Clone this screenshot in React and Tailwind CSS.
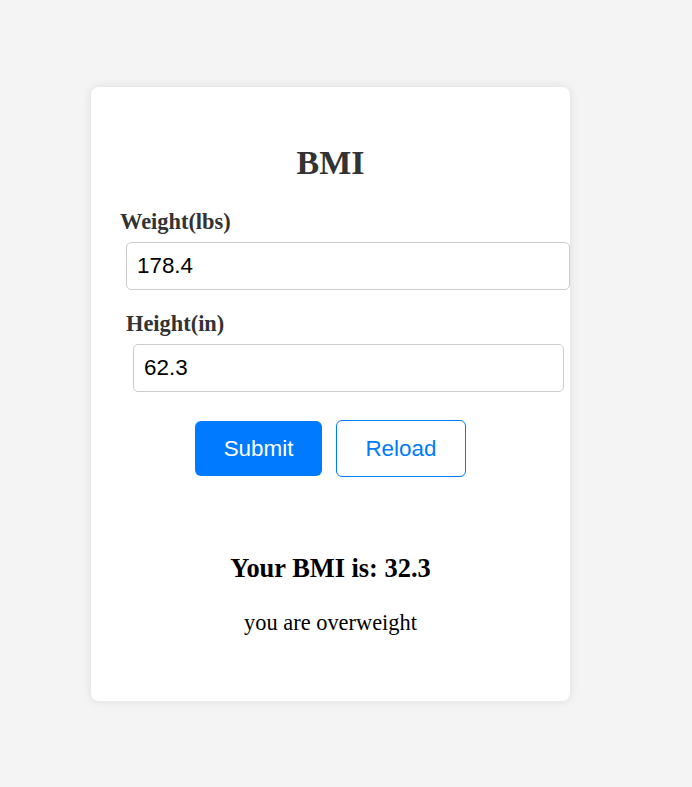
export default function App() {
    const serif = { fontFamily: '"Liberation Serif", "Times New Roman", serif' }

    return (
        <div className="min-h-screen w-full bg-[#f4f4f4] pt-[87px]" style={{ fontFamily: '"Liberation Sans", Arial, sans-serif' }}>
            <div className="ml-[91px] w-[479px] rounded-lg bg-white pt-[56px] pb-[65px] shadow-[0_0_10px_rgba(0,0,0,0.1)]">
                <h1 className="text-center text-[34px] leading-[1.15] font-bold text-[#333]" style={serif}>
                    BMI
                </h1>

                <div className="mt-[26.5px] pl-[29px]">
                    <label className="block text-[22.4px] leading-[1.15] font-bold text-[#333]" style={serif}>
                        Weight(lbs)
                    </label>
                    <input
                        type="text"
                        defaultValue="178.4"
                        className="mt-[7.5px] ml-[6px] block w-[444px] rounded-[5px] border border-[#ccc] bg-white px-[10px] py-[10px] text-[22.4px] leading-[1.15] text-black outline-none"
                    />
                </div>

                <div className="mt-[21px] pl-[35px]">
                    <label className="block text-[22.4px] leading-[1.15] font-bold text-[#333]" style={serif}>
                        Height(in)
                    </label>
                    <input
                        type="text"
                        defaultValue="62.3"
                        className="mt-[8px] ml-[7px] block w-[431px] rounded-[5px] border border-[#ccc] bg-white px-[10px] py-[10px] text-[22.4px] leading-[1.15] text-black outline-none"
                    />
                </div>

                {/* buttons */}
                <div className="mt-[28px] flex items-center justify-center gap-[14px]">
                    <button className="rounded-[6px] bg-[#007bff] px-[28.6px] py-[14.6px] text-[22.4px] leading-[1.15] text-white">
                        Submit
                    </button>
                    <button className="rounded-[6px] border border-[#007bff] bg-white px-[28.5px] py-[14.6px] text-[22.4px] leading-[1.15] text-[#007bff]">
                        Reload
                    </button>
                </div>

                {/* result */}
                <div className="mt-[76px] text-center text-black" style={serif}>
                    <h2 className="text-[26.4px] leading-[1.15] font-bold">Your BMI is: 32.3</h2>
                    <p className="mt-[27px] text-[22.4px] leading-[1.15]">you are overweight</p>
                </div>
            </div>
        </div>
    )
}
